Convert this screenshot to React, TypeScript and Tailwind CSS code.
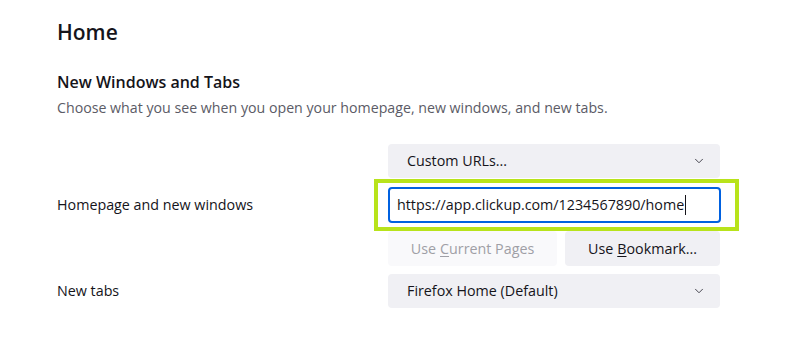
import { ChevronDown } from 'lucide-react'

const font = { fontFamily: '"Open Sans", "Noto Sans", sans-serif' }

function Select({ label }: { label: string }) {
  return (
    <div className="flex h-[34px] w-[332px] items-center justify-between rounded-[4px] bg-[#f0f0f4] pl-[19px] pr-[14px] text-[14.3px] text-[#15141a]">
      <span>{label}</span>
      <ChevronDown size={14} strokeWidth={1.6} className="text-[#3a3944]" />
    </div>
  )
}

export default function App() {
  return (
    <div className="h-[340px] w-[798px] bg-white text-[#15141a]" style={font}>
      <div className="pl-[57px] pt-[17px]">
        <h1 className="text-[21px] font-semibold leading-[30px]">Home</h1>
        <h2 className="mt-[23px] text-[16px] font-semibold leading-[24px]">New Windows and Tabs</h2>
        <p className="mt-[4px] text-[14.2px] leading-[20px] text-[#5b5b66]">
          Choose what you see when you open your homepage, new windows, and new tabs.
        </p>

        <div className="mt-[26px] grid grid-cols-[331px_332px] items-center text-[14.3px]">
          <div />
          <Select label="Custom URLs..." />

          <div>Homepage and new windows</div>
          <div className="-ml-[14px] mt-[1px] w-[365px] border-[4px] border-[#b8e31b] py-[4px] pl-[10px]">
            <div className="flex h-[36px] w-[333px] items-center rounded-[4px] border-2 border-[#0061e0] pl-[7px]">
              <span>https://app.clickup.com/1234567890/home</span>
              <span className="ml-[1px] h-[20px] w-px bg-[#15141a]" />
            </div>
          </div>

          <div />
          <div className="flex gap-[8px]">
            <div className="flex h-[35px] w-[169px] items-center justify-center rounded-[4px] bg-[#f9f9fb] text-[#9f9fa6]">
              Use <span className="ml-[4px] underline underline-offset-2">C</span>urrent Pages
            </div>
            <div className="flex h-[35px] w-[155px] items-center justify-center rounded-[4px] bg-[#f0f0f4]">
              Use <span className="ml-[4px] underline underline-offset-2">B</span>ookmark...
            </div>
          </div>

          <div className="mt-[8px]">New tabs</div>
          <div className="mt-[8px]">
            <Select label="Firefox Home (Default)" />
          </div>
        </div>
      </div>
    </div>
  )
}
